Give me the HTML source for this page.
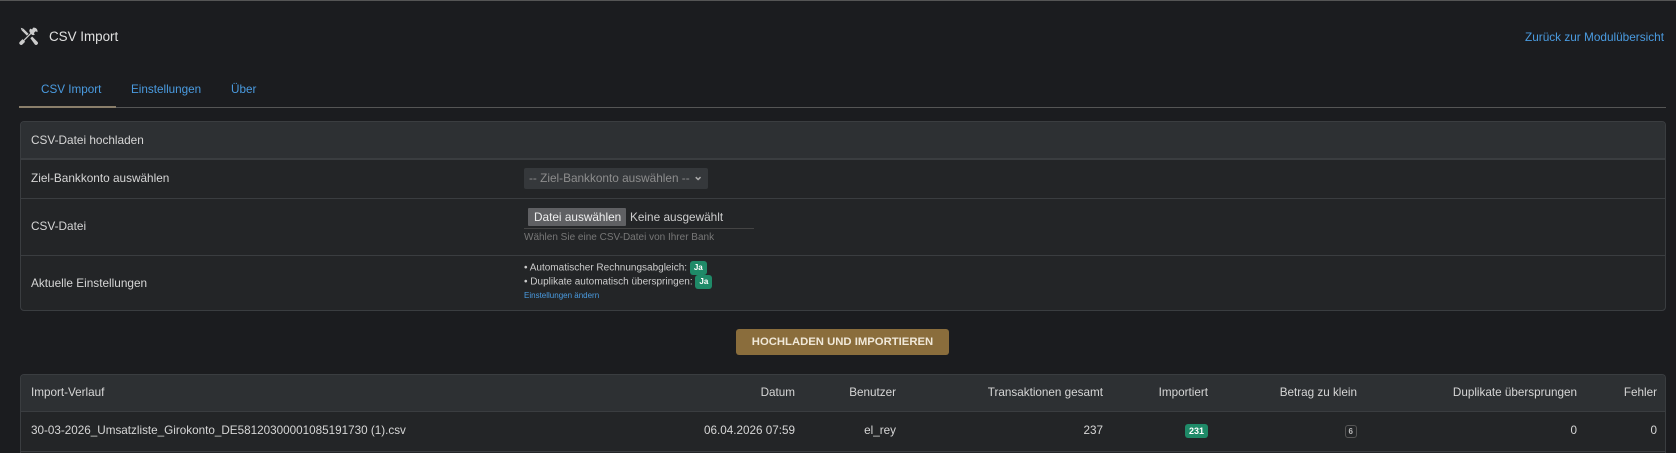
<!DOCTYPE html>
<html style="overflow:hidden;height:453px"><head><meta charset="utf-8"><style>
*{box-sizing:border-box;margin:0;padding:0}
body{width:1676px;height:453px;overflow:hidden;background:#1b1c1f;font-family:"Liberation Sans",sans-serif;color:#d6d6d6;position:relative;border-top:1px solid #555}
.a{position:absolute;white-space:nowrap}
.blue{color:#4a9be0}
.card{position:absolute;left:20px;width:1646px;background:#232527;border:1px solid #3a3d40;border-radius:4px;overflow:hidden}
.hd{background:#2d3033;border-bottom:1px solid #3a3d40}
.row{position:absolute;left:0;right:0;border-top:1px solid #3a3d40}
.badge{display:inline-block;background:#1f8a68;color:#fff;font-weight:bold;font-size:9px;padding:2px 4px;border-radius:3px;line-height:10px;vertical-align:middle}
</style></head><body>
<svg class="a" style="left:19px;top:25px" width="21" height="21" viewBox="0 0 24 24" fill="#ccc"><path d="M3 5l2-2 6 6-2 2z"/><path d="M2 2l3 1-2 2z"/><path d="M13 14l2-2 6 6c1 1 1 2 0 3s-2 1-3 0z"/><path d="M16 2c3-1 6 2 5 5l-2-1-2 2 1 2c-2 1-4 0-4-1L6 17l1 1-3 3c-1 1-2 1-3 0s-1-2 0-3l3-3 1 1 8-8c-1-1-2-3 0-5l2 1 1-2z"/></svg>
<div class="a" style="left:49px;top:28px;font-size:13.4px;color:#e0e0e0">CSV Import</div>
<div class="a blue" style="right:12px;top:29px;font-size:11.8px">Zurück zur Modulübersicht</div>
<div class="a blue" style="left:41px;top:82px;font-size:11.7px">CSV Import</div>
<div class="a blue" style="left:131px;top:82px;font-size:11.7px">Einstellungen</div>
<div class="a blue" style="left:231px;top:82px;font-size:11.7px">Über</div>
<div class="a" style="left:19px;top:106px;width:1647px;height:1px;background:#555"></div>
<div class="a" style="left:19px;top:105px;width:97px;height:2px;background:#8a7e6a"></div>

<div class="card" style="top:120px;height:190px">
<div class="hd" style="height:37px"></div>
<div class="a" style="left:10px;top:11px;font-size:11.8px">CSV-Datei hochladen</div>
<div class="row" style="top:37px;height:39px"><div class="a" style="left:10px;top:11px;font-size:11.8px">Ziel-Bankkonto auswählen</div>
<div class="a" style="left:503px;top:8px;width:184px;height:21px;background:#35383b;border-radius:2px;color:#8d8d8d;font-size:11.8px;padding:3px 5px">-- Ziel-Bankkonto auswählen -- <span style="position:absolute;right:5px;top:1px;color:#aaa;font-weight:bold">⌄</span></div></div>
<div class="row" style="top:76px;height:57px"><div class="a" style="left:10px;top:20px;font-size:11.8px">CSV-Datei</div>
<div class="a" style="left:507px;top:9px;width:98px;height:18px;background:#5f6063;color:#eee;font-size:11.8px;padding:2px 6px;border-radius:1px">Datei auswählen</div>
<div class="a" style="left:609px;top:11px;font-size:11.8px;color:#ccc">Keine ausgewählt</div>
<div class="a" style="left:503px;top:29px;width:230px;height:1px;background:#444"></div>
<div class="a" style="left:503px;top:33px;font-size:10px;color:#777">Wählen Sie eine CSV-Datei von Ihrer Bank</div></div>
<div class="row" style="top:133px;height:57px"><div class="a" style="left:10px;top:20px;font-size:11.8px">Aktuelle Einstellungen</div>
<div class="a" style="left:503px;top:5px;font-size:10px;color:#ccc">• Automatischer Rechnungsabgleich: <span class="badge" style="font-size:8px">Ja</span></div>
<div class="a" style="left:503px;top:19px;font-size:10px;color:#ccc">• Duplikate automatisch überspringen: <span class="badge" style="font-size:8px">Ja</span></div>
<div class="a blue" style="left:503px;top:35px;font-size:8px">Einstellungen ändern</div></div>
</div>

<div class="a" style="left:736px;top:328px;width:213px;height:26px;background:#8a6d3c;border-radius:3px;color:#f0e8d8;font-weight:bold;font-size:11.3px;text-align:center;line-height:26px">HOCHLADEN UND IMPORTIEREN</div>

<div class="card" style="top:373px;height:80px;font-size:11.7px;border-bottom:none;border-radius:4px 4px 0 0">
<div class="hd" style="height:37px"></div>
<div class="a" style="left:10px;top:11px">Import-Verlauf</div>
<div class="a" style="right:870px;top:11px">Datum</div>
<div class="a" style="right:769px;top:11px">Benutzer</div>
<div class="a" style="right:562px;top:11px">Transaktionen gesamt</div>
<div class="a" style="right:457px;top:11px">Importiert</div>
<div class="a" style="right:308px;top:11px">Betrag zu klein</div>
<div class="a" style="right:88px;top:11px">Duplikate übersprungen</div>
<div class="a" style="right:8px;top:11px">Fehler</div>
<div class="a" style="left:10px;top:49px">30-03-2026_Umsatzliste_Girokonto_DE58120300001085191730 (1).csv</div>
<div class="a" style="right:870px;top:49px">06.04.2026 07:59</div>
<div class="a" style="right:769px;top:49px">el_rey</div>
<div class="a" style="right:562px;top:49px">237</div>
<div class="a" style="right:457px;top:49px"><span class="badge">231</span></div>
<div class="a" style="right:308px;top:49px"><span style="display:inline-block;border:1px solid #555;border-radius:3px;font-size:8px;font-weight:bold;padding:1px 3px;color:#bbb">6</span></div>
<div class="a" style="right:88px;top:49px">0</div>
<div class="a" style="right:8px;top:49px">0</div>
<div class="row" style="top:76px;height:10px"></div>
</div>
</body></html>
